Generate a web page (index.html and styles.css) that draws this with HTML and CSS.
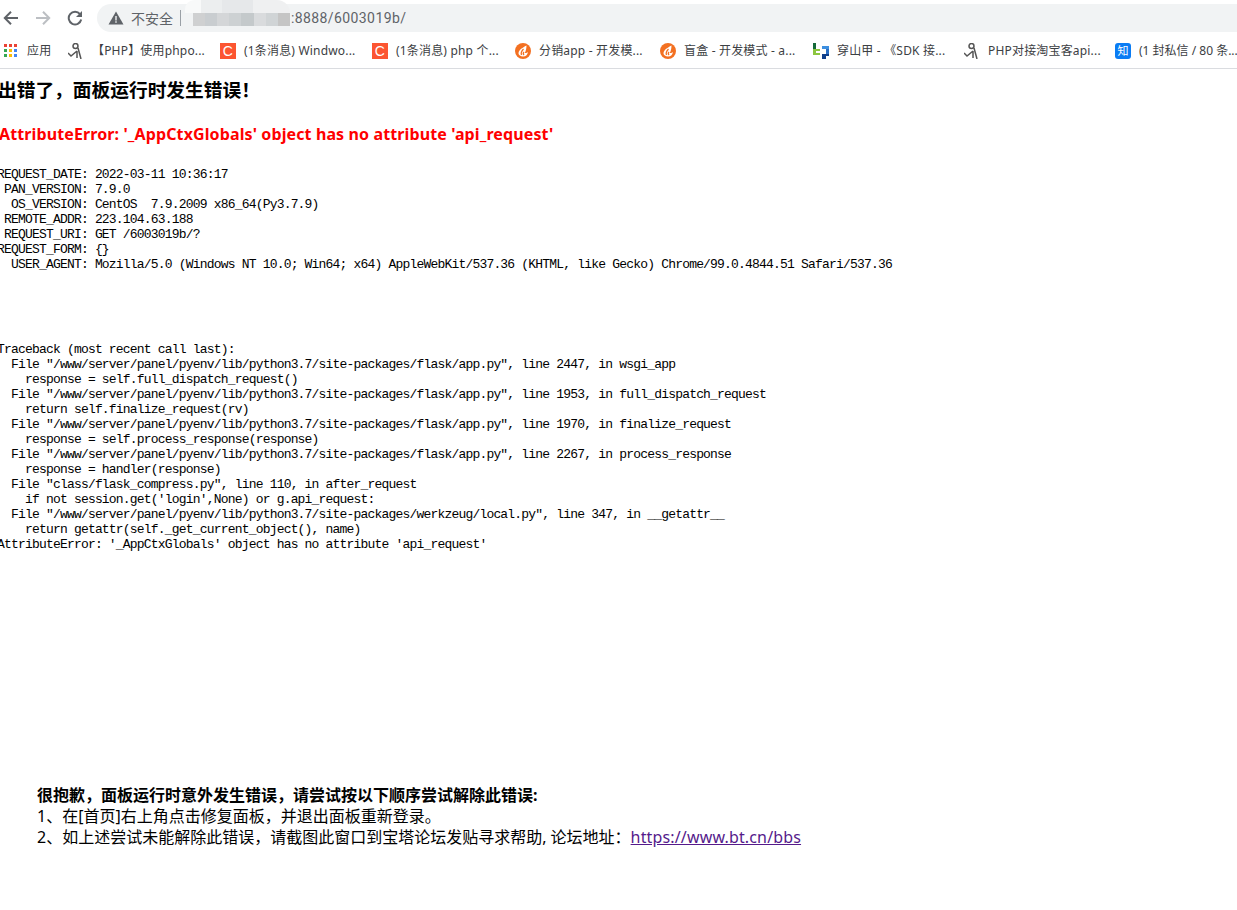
FILE: index.html
```html
<!DOCTYPE html>
<html lang="zh-CN">
<head>
<meta charset="utf-8">
<title>出错了</title>
<link rel="stylesheet" href="styles.css">
</head>
<body>
<header class="toolbar">
  <svg class="nav" width="16" height="16" viewBox="0 0 16 16"><path d="M15 8H2.500M8 1.800 1.800 8 8 14.200" fill="none" stroke="#5f6368" stroke-width="2"/></svg>
  <svg class="nav" width="16" height="16" viewBox="0 0 16 16"><path d="M1 8h12.500M8 1.800 14.200 8 8 14.200" fill="none" stroke="#bcbfc3" stroke-width="2"/></svg>
  <svg class="nav" width="16" height="16" viewBox="0 0 16 16"><path d="M13 4.200A6.300 6.300 0 1 0 14.200 9.500" fill="none" stroke="#5f6368" stroke-width="2"/><path d="M15 1v6H9z" fill="#5f6368"/></svg>
  <div class="omnibox">
    <svg width="16" height="16" viewBox="0 0 16 16"><path d="M8 1.500 15.500 14.500H.5z" fill="#5f6368"/><path d="M7.300 6h1.400v4.500H7.300zM7.300 11.300h1.400v1.400H7.300z" fill="#f1f3f4"/></svg>
    <span class="insecure">不安全</span>
    <span class="sep"></span>
    <span class="blur"></span>
    <span class="url">:8888/6003019b/</span>
  </div>
</header>
<nav class="bookmarks">
  <a class="bm bm-apps"><svg width="16" height="16" viewBox="0 0 16 16"><rect x="1" y="1" width="3" height="3" fill="#ea4335"/><rect x="6" y="1" width="3" height="3" fill="#ea4335"/><rect x="11" y="1" width="3" height="3" fill="#ea4335"/><rect x="1" y="6" width="3" height="3" fill="#34a853"/><rect x="6" y="6" width="3" height="3" fill="#fbbc05"/><rect x="11" y="6" width="3" height="3" fill="#4285f4"/><rect x="1" y="11" width="3" height="3" fill="#34a853"/><rect x="6" y="11" width="3" height="3" fill="#fbbc05"/><rect x="11" y="11" width="3" height="3" fill="#4285f4"/></svg><span>应用</span></a>
  <a class="bm w1"><svg width="16" height="16" viewBox="0 0 16 16"><path d="M0 10l3 3 6-5M9 8v7M10 5l3 11" fill="none" stroke="#555" stroke-width="1.500"/><circle cx="7.500" cy="3" r="2.500" fill="none" stroke="#555" stroke-width="1.500"/></svg><span>【PHP】使用phpo...</span></a>
  <a class="bm w2"><span class="ic-c">C</span><span>(1条消息) Windwo...</span></a>
  <a class="bm w3"><span class="ic-c">C</span><span>(1条消息) php 个...</span></a>
  <a class="bm w4"><svg width="16" height="16" viewBox="0 0 16 16"><circle cx="8" cy="8" r="8" fill="#f37021"/><path d="M11.500 2.500C9 4 3.500 6.500 3.500 10.500c0 1.500 2 3 4.500 3 3 0 4.800-2 4.800-4.500-1 1-2 1-3 1 1-2 1.700-4.500 1.700-7.500z" fill="#fff"/><path d="M8.500 6C6.500 8 5.500 9.500 6.500 12M9 9c-1 1-1 2 0 3" fill="none" stroke="#f37021" stroke-width="1.300"/></svg><span>分销app - 开发模...</span></a>
  <a class="bm w5"><svg width="16" height="16" viewBox="0 0 16 16"><circle cx="8" cy="8" r="8" fill="#f37021"/><path d="M11.500 2.500C9 4 3.500 6.500 3.500 10.500c0 1.500 2 3 4.500 3 3 0 4.800-2 4.800-4.500-1 1-2 1-3 1 1-2 1.700-4.500 1.700-7.500z" fill="#fff"/><path d="M8.500 6C6.500 8 5.500 9.500 6.500 12M9 9c-1 1-1 2 0 3" fill="none" stroke="#f37021" stroke-width="1.300"/></svg><span>盲盒 - 开发模式 - a...</span></a>
  <a class="bm w6"><svg width="16" height="16" viewBox="0 0 16 16"><path d="M0 0h3v6H0z" fill="#14693a"/><path d="M0 6h3v6H0zM3 6h4v2H3zM3 10h4v2H3z" fill="#8cc63f"/><path d="M9 3h7v3H9z" fill="#3d8fe0"/><path d="M13 6h3v5h-3z" fill="#2a6fc4"/><path d="M9 11h7v2h-3v3H9z" fill="#0f3f8c"/></svg><span>穿山甲 - 《SDK 接...</span></a>
  <a class="bm w7"><svg width="16" height="16" viewBox="0 0 16 16"><path d="M0 10l3 3 6-5M9 8v7M10 5l3 11" fill="none" stroke="#555" stroke-width="1.500"/><circle cx="7.500" cy="3" r="2.500" fill="none" stroke="#555" stroke-width="1.500"/></svg><span>PHP对接淘宝客api...</span></a>
  <a class="bm bm-last"><span class="ic-zhi">知</span><span>(1 封私信 / 80 条...</span></a>
</nav>
<main class="page">
  <h2 class="title">出错了，面板运行时发生错误！</h2>
  <h3 class="err">AttributeError: '_AppCtxGlobals' object has no attribute 'api_request'</h3>
  <pre class="info">REQUEST_DATE: 2022-03-11 10:36:17
 PAN_VERSION: 7.9.0
  OS_VERSION: CentOS  7.9.2009 x86_64(Py3.7.9)
 REMOTE_ADDR: 223.104.63.188
 REQUEST_URI: GET /6003019b/?
REQUEST_FORM: {}
  USER_AGENT: Mozilla/5.0 (Windows NT 10.0; Win64; x64) AppleWebKit/537.36 (KHTML, like Gecko) Chrome/99.0.4844.51 Safari/537.36</pre>
  <pre class="trace">Traceback (most recent call last):
  File "/www/server/panel/pyenv/lib/python3.7/site-packages/flask/app.py", line 2447, in wsgi_app
    response = self.full_dispatch_request()
  File "/www/server/panel/pyenv/lib/python3.7/site-packages/flask/app.py", line 1953, in full_dispatch_request
    return self.finalize_request(rv)
  File "/www/server/panel/pyenv/lib/python3.7/site-packages/flask/app.py", line 1970, in finalize_request
    response = self.process_response(response)
  File "/www/server/panel/pyenv/lib/python3.7/site-packages/flask/app.py", line 2267, in process_response
    response = handler(response)
  File "class/flask_compress.py", line 110, in after_request
    if not session.get('login',None) or g.api_request:
  File "/www/server/panel/pyenv/lib/python3.7/site-packages/werkzeug/local.py", line 347, in __getattr__
    return getattr(self._get_current_object(), name)
AttributeError: '_AppCtxGlobals' object has no attribute 'api_request'</pre>
  <div class="help">
    <strong>很抱歉，面板运行时意外发生错误，请尝试按以下顺序尝试解除此错误:</strong>
    <p>1、在[首页]右上角点击修复面板，并退出面板重新登录。</p>
    <p>2、如上述尝试未能解除此错误，请截图此窗口到宝塔论坛发贴寻求帮助, 论坛地址：<a class="link" href="#">https://www.bt.cn/bbs</a></p>
  </div>
</main>
</body>
</html>
```
FILE: styles.css
```css
* { box-sizing: border-box; }
html, body { margin: 0; padding: 0; background: #fff; overflow: hidden; }
body { width: 1237px; height: 910px; font-family: "Noto Sans", "Noto Sans CJK SC", sans-serif; color: #000; }

.toolbar { height: 36px; display: flex; align-items: center; padding-left: 3px; background: #fff; }
.nav { flex: none; margin-right: 16px; }
.omnibox { flex: 1; height: 28px; margin-left: -2px; border-radius: 14px 0 0 14px; background: #f1f3f4; display: flex; align-items: center; padding-left: 11px; font-size: 14px; color: #5f6368; }
.insecure { margin-left: 7px; font-size: 14px; font-family: "Noto Sans CJK SC", sans-serif; }
.sep { width: 1px; height: 16px; background: #9aa0a6; margin: 0 12px 0 7px; }
.blur { position: relative; width: 97px; height: 13px; margin-top: 3px; background: linear-gradient(90deg, #cfd0d1 0 12.5%, #c9cdd0 12.5% 25%, #d4d6d8 25% 37.5%, #cdd1d3 37.5% 50%, #c4c9cb 50% 62.5%, #d9dbdd 62.5% 75%, #d0d4d6 75% 87.5%, #c5c5c5 87.5%); }
.blur::before { content: ""; position: absolute; left: -8px; right: 0; bottom: 13px; height: 13px; border-radius: 10px 14px 0 0; background: linear-gradient(90deg, #f8f9f9 0 15%, #eceeef 15% 35%, #e6e8ea 35% 65%, #eff0f1 65%); }
.url { font-family: "Roboto", sans-serif; font-size: 14px; color: #5f6368; letter-spacing: .4px; margin-left: 1px; }

.bookmarks { height: 33px; display: flex; align-items: center; padding: 0 0 3px 3px; border-bottom: 1px solid #dadce0; font-size: 12px; line-height: 16px; letter-spacing: .18px; color: #3c4043; white-space: nowrap; }
.bm { display: flex; align-items: center; gap: 8px; flex: none; }
.bm svg { flex: none; }
.bm-apps { width: 65px; }
.bm-last { letter-spacing: 0; }
.w1 { width: 152px; }
.w2 { width: 152px; }
.w3 { width: 143px; }
.w4 { width: 145px; }
.w5 { width: 153px; }
.w6 { width: 151px; }
.w7 { width: 151px; }
.ic-c { width: 16px; height: 16px; background: #fc5531; color: #fff; font: 14px/16px "Liberation Sans", sans-serif; text-align: center; }
.ic-zhi { width: 16px; height: 16px; border-radius: 3px; background: #0a7cf4; color: #fff; font-size: 11px; line-height: 16px; text-align: center; }

.page { margin-left: -1px; }
.title { margin: 0 0 0 -1px; padding-top: 8px; font-size: 18.72px; line-height: 26px; font-weight: 700; }
.err { margin: 18px 0 0; font-size: 16px; line-height: 26px; font-weight: 700; letter-spacing: .115px; color: #f00; }
.info, .trace { margin: 0 0 0 -2px; font-family: "Liberation Mono", monospace; font-size: 13px; letter-spacing: -.81px; line-height: 15px; white-space: pre; }
.info { margin-top: 20px; }
.trace { margin-top: 70px; }
.help { margin: 233px 0 0 38px; font-size: 16px; line-height: 21px; }
.help p { margin: 0; }
.help strong { display: block; }
.link { color: #551a8b; text-decoration: underline; letter-spacing: .15px; }
```
